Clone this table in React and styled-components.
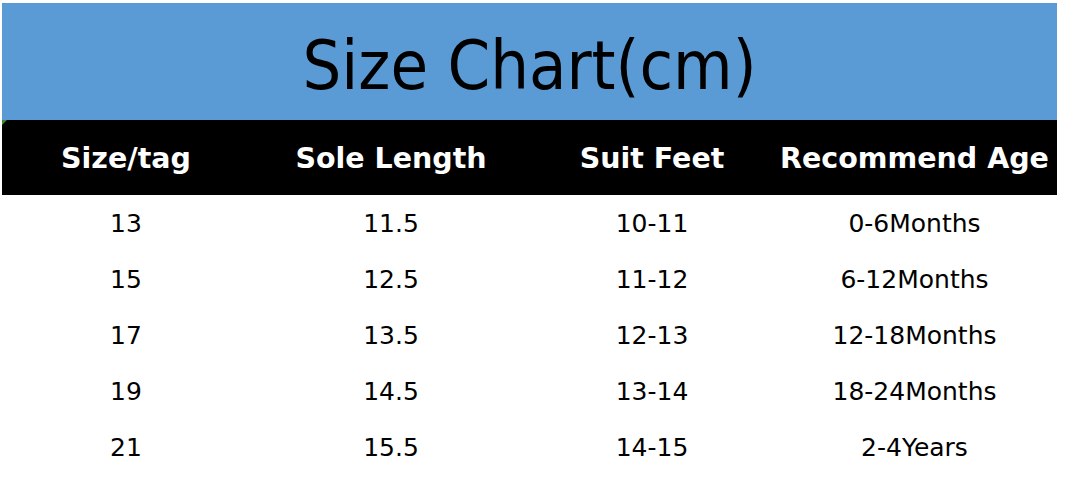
import React from 'react'
import styled, { createGlobalStyle } from 'styled-components'

const rows = [
  ['13', '11.5', '10-11', '0-6Months'],
  ['15', '12.5', '11-12', '6-12Months'],
  ['17', '13.5', '12-13', '12-18Months'],
  ['19', '14.5', '13-14', '18-24Months'],
  ['21', '15.5', '14-15', '2-4Years'],
]

const heads = ['Size/tag', 'Sole Length', 'Suit Feet', 'Recommend Age']

const App = () => {
  return (
    <>
      <GlobalStyle />
      <Page>
        <Chart>
          <Banner>Size Chart(cm)</Banner>
          <HeadRow>
            {heads.map((h) => <HeadCell key={h}>{h}</HeadCell>)}
          </HeadRow>
          {rows.map((r) => (
            <Row key={r[0]}>
              {r.map((c, i) => <Cell key={i}>{c}</Cell>)}
            </Row>
          ))}
        </Chart>
      </Page>
    </>
  )
}

export default App

const GlobalStyle = createGlobalStyle`
  html, body {
    margin: 0;
    padding: 0;
    background: #fff;
  }
`

const Page = styled.div`
  width: 1071px;
  height: 500px;
  padding: 3px 0 0 2px;
  box-sizing: border-box;
  font-family: "DejaVu Sans", sans-serif;
  color: #000;
`

const Chart = styled.div`
  width: 1055px;
`

const cols = '248px 282px 240px 285px'

const Banner = styled.div`
  height: 117px;
  background-color: #5b9bd5;
  display: flex;
  align-items: center;
  justify-content: center;
  font-family: "DejaVu Sans Condensed", "DejaVu Sans", sans-serif;
  font-size: 68px;
  padding-top: 8px;
  box-sizing: border-box;
  color: #000;
`

const HeadRow = styled.div`
  position: relative;
  display: grid;
  grid-template-columns: ${cols};
  height: 75px;
  background-color: #000;
  align-items: center;

  &::before {
    content: '';
    position: absolute;
    left: 0;
    top: 0;
    border-top: 5px solid #3c8a2e;
    border-right: 5px solid transparent;
  }
`

const HeadCell = styled.div`
  color: #fff;
  font-weight: 700;
  font-size: 28.5px;
  text-align: center;
  white-space: nowrap;
  padding-top: 1px;
`

const Row = styled.div`
  display: grid;
  grid-template-columns: ${cols};
  height: 56px;
  align-items: center;
`

const Cell = styled.div`
  font-size: 25px;
  text-align: center;
  white-space: nowrap;
`
